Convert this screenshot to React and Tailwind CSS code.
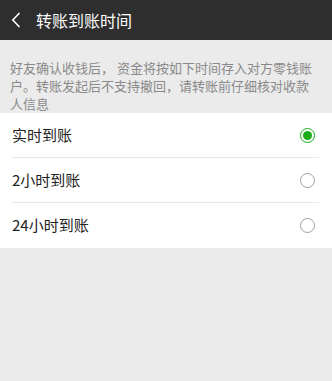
import React, { useState } from 'react';

const options = ['实时到账', '2小时到账', '24小时到账'];

const Radio = ({ checked }) =>
  checked ? (
    <span className="flex h-[15px] w-[15px] items-center justify-center rounded-full border-[1.5px] border-[#1aad19]">
      <span className="block h-[9px] w-[9px] rounded-full bg-[#1aad19]" />
    </span>
  ) : (
    <span className="block h-[15px] w-[15px] rounded-full border border-[#a0a0a0]" />
  );

export default function App() {
  const [selected, setSelected] = useState(0);

  return (
    <div
      className="flex h-[381px] w-[332px] flex-col bg-[#ebebeb]"
      style={{ fontFamily: '"Noto Sans CJK SC", "Noto Sans", sans-serif' }}
    >
      <div className="flex h-[40px] items-center bg-[#2e2e2e] text-white">
        <svg width="10" height="16" viewBox="0 0 10 16" className="ml-[11px]">
          <path d="M8.5 1 L1.8 8 L8.5 15" fill="none" stroke="#fff" strokeWidth="1.6" />
        </svg>
        <span className="ml-[15px] text-[16px] leading-none">转账到账时间</span>
      </div>

      <p className="pl-[10px] pr-[14px] pt-[19px] text-[13px] leading-[18px] text-[#8a8a8a]">
        好友确认收钱后， 资金将按如下时间存入对方零钱账户。转账发起后不支持撤回，请转账前仔细核对收款人信息
      </p>

      <div className="bg-white pl-[12px] pr-[13px]">
        {options.map((label, i) => (
          <div
            key={label}
            onClick={() => setSelected(i)}
            className={
              'flex h-[45px] items-center justify-between ' +
              (i < options.length - 1 ? 'border-b border-[#e8e8e8]' : '')
            }
          >
            <span className="text-[15px] text-[#222]">{label}</span>
            <span className="mr-[4px] block">
              <Radio checked={selected === i} />
            </span>
          </div>
        ))}
      </div>
    </div>
  );
}
